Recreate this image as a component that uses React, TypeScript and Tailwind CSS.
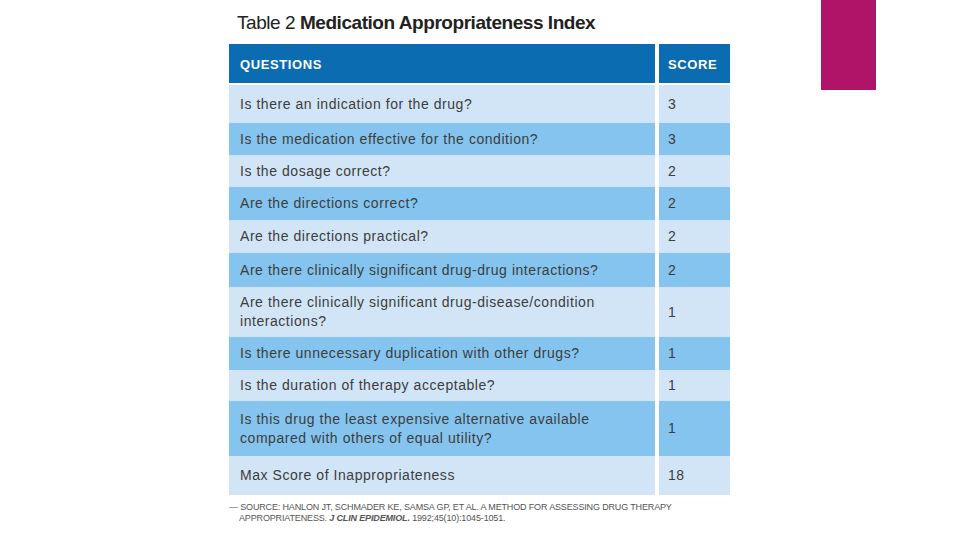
const rows = [
  { q: ["Is there an indication for the drug?"], s: "3", h: "h-[38px]", tone: "bg-[#d2e5f6]" },
  { q: ["Is the medication effective for the condition?"], s: "3", h: "h-[32px]", tone: "bg-[#84c4ee]" },
  { q: ["Is the dosage correct?"], s: "2", h: "h-[32px]", tone: "bg-[#d2e5f6]" },
  { q: ["Are the directions correct?"], s: "2", h: "h-[33px]", tone: "bg-[#84c4ee]" },
  { q: ["Are the directions practical?"], s: "2", h: "h-[33px]", tone: "bg-[#d2e5f6]" },
  { q: ["Are there clinically significant drug-drug interactions?"], s: "2", h: "h-[34px]", tone: "bg-[#84c4ee]" },
  {
    q: ["Are there clinically significant drug-disease/condition", "interactions?"],
    s: "1",
    h: "h-[50px]",
    tone: "bg-[#d2e5f6]",
  },
  { q: ["Is there unnecessary duplication with other drugs?"], s: "1", h: "h-[33px]", tone: "bg-[#84c4ee]" },
  { q: ["Is the duration of therapy acceptable?"], s: "1", h: "h-[31px]", tone: "bg-[#d2e5f6]" },
  {
    q: ["Is this drug the least expensive alternative available", "compared with others of equal utility?"],
    s: "1",
    h: "h-[55px]",
    tone: "bg-[#84c4ee]",
  },
  { q: ["Max Score of Inappropriateness"], s: "18", h: "h-[39px]", tone: "bg-[#d2e5f6]" },
]

export default function App() {
  return (
    <div className="relative w-[960px] h-[540px] bg-white overflow-hidden font-['Liberation_Sans',sans-serif]">
      {/* accent tab */}
      <div className="absolute left-[821px] top-0 w-[55px] h-[90px] bg-[#b01468]" />

      <div className="ml-[229px] w-[501px] pt-[10px]">
        <h1 className="pl-[8px] text-[19px] leading-[26px] text-[#222] tracking-[-0.45px]">
          Table 2 <span className="font-bold">Medication Appropriateness Index</span>
        </h1>

        <div className="mt-[8px] flex flex-col">
          <div className="flex gap-[4px] h-[39px] mb-[2px]">
            <div className="flex-1 bg-[#0b6cb1] flex items-center pl-[11px] pt-[2px] text-white font-bold text-[13px] tracking-[0.6px]">
              QUESTIONS
            </div>
            <div className="w-[71px] bg-[#0b6cb1] flex items-center pl-[9px] pt-[2px] text-white font-bold text-[13px] tracking-[0.6px]">
              SCORE
            </div>
          </div>

          {rows.map((r, i) => (
            <div key={i} className={`flex gap-[4px] ${r.h}`}>
              <div className={`flex-1 ${r.tone} flex flex-col justify-center pl-[11px] text-[14px] leading-[19px] tracking-[0.55px] text-[#3d3d3d]`}>
                {r.q.map((line, j) => (
                  <span key={j}>{line}</span>
                ))}
              </div>
              <div className={`w-[71px] ${r.tone} flex items-center pl-[9px] text-[14px] tracking-[0.5px] text-[#3d3d3d]`}>
                {r.s}
              </div>
            </div>
          ))}
        </div>

        <div className="mt-[7px] text-[9px] leading-[11px] text-[#555] tracking-[-0.15px]">
          <div>
            — SOURCE: HANLON JT, SCHMADER KE, SAMSA GP, ET AL. A METHOD FOR ASSESSING DRUG THERAPY
          </div>
          <div className="pl-[10px]">
            APPROPRIATENESS. <span className="font-bold italic">J CLIN EPIDEMIOL.</span> 1992;45(10):1045-1051.
          </div>
        </div>
      </div>
    </div>
  )
}
